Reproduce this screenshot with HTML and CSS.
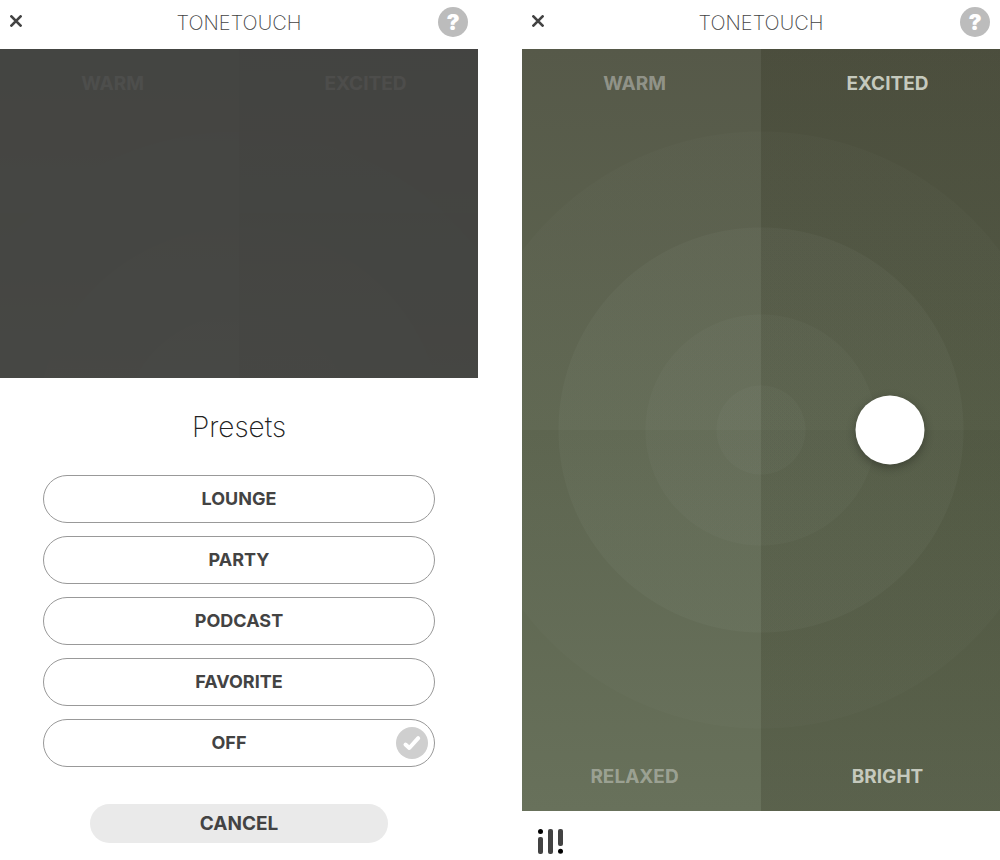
FILE: index.html
```html
<!DOCTYPE html>
<html lang="en">
  <head>
    <meta charset="UTF-8" />
    <meta name="viewport" content="width=device-width, initial-scale=1.0" />
    <title>ToneTouch</title>
    <link rel="stylesheet" href="styles.css">
  </head>
  <body>
    <main class="screens">
      <section class="screen">
        <header class="topbar">
          <button type="button" class="close" aria-label="Close">
            <svg width="12" height="12" viewBox="0 0 12 12"><path d="M1.4 1.4 10.6 10.6M10.6 1.4 1.4 10.6" /></svg>
          </button>
          <h1>TONETOUCH</h1>
          <button type="button" class="help" aria-label="Help">?</button>
        </header>
        <div class="pad dimmed">
          <span class="tone">WARM</span>
          <span class="tone">EXCITED</span>
        </div>
        <div class="sheet">
          <h2>Presets</h2>
          <div class="presets">
            <button type="button" class="preset">LOUNGE</button>
            <button type="button" class="preset">PARTY</button>
            <button type="button" class="preset">PODCAST</button>
            <button type="button" class="preset">FAVORITE</button>
            <button type="button" class="preset selected">
              <span>OFF</span>
              <svg class="check" width="32" height="32" viewBox="0 0 32 32">
                <circle cx="16" cy="16" r="16" />
                <path d="M9.5 17.5 13.3 21 22.2 11.2" />
              </svg>
            </button>
          </div>
          <button type="button" class="cancel">CANCEL</button>
        </div>
      </section>

      <section class="screen">
        <header class="topbar">
          <button type="button" class="close" aria-label="Close">
            <svg width="12" height="12" viewBox="0 0 12 12"><path d="M1.4 1.4 10.6 10.6M10.6 1.4 1.4 10.6" /></svg>
          </button>
          <h1>TONETOUCH</h1>
          <button type="button" class="help" aria-label="Help">?</button>
        </header>
        <div class="pad">
          <span class="tone">WARM</span>
          <span class="tone active">EXCITED</span>
          <span class="tone bottom">RELAXED</span>
          <span class="tone bottom active">BRIGHT</span>
          <button type="button" class="knob" aria-label="Tone"></button>
        </div>
        <footer class="bottombar">
          <button type="button" class="presets-btn" aria-label="Presets">
            <svg width="26" height="26" viewBox="0 0 26 26">
              <rect x="0" y="8" width="5" height="17" rx="2" />
              <rect x="10" y="0" width="5" height="25" rx="2" />
              <rect x="20" y="0" width="5" height="17" rx="2" />
              <circle class="dot" cx="2.5" cy="2.5" r="2.5" />
              <circle class="dot" cx="22.5" cy="22.3" r="2.5" />
            </svg>
          </button>
        </footer>
      </section>
    </main>
  </body>
</html>
```

FILE: styles.css
```css
* {
  box-sizing: border-box;
}
body {
  margin: 0;
  background: #fff;
  color: #434343;
  font-family: Inter, "Liberation Sans", sans-serif;
}
button {
  padding: 0;
  border: none;
  background: none;
  color: inherit;
  font-family: inherit;
  cursor: pointer;
}
svg {
  display: block;
}
.screens {
  display: grid;
  grid-template-columns: 1fr 1fr;
  gap: 44px;
  min-height: 100vh;
}
.screen {
  display: flex;
  flex-direction: column;
}

/* top bar */
.topbar {
  display: grid;
  grid-template-columns: 30px 1fr 30px;
  align-items: center;
  height: 49px;
  padding: 0 10px 6px;
}
.close {
  padding-bottom: 2px;
}
.close svg {
  fill: none;
  stroke: #434343;
  stroke-width: 2.7;
  stroke-linecap: round;
}
.topbar h1 {
  margin: 2px 0 0;
  font-size: 20px;
  line-height: 24px;
  font-weight: 200;
  text-align: center;
}
.help {
  width: 30px;
  height: 30px;
  border-radius: 50%;
  background: #bcbcbc;
  color: #fff;
  font-size: 22px;
  line-height: 30px;
  font-weight: 900;
}

/* tone pad */
.pad {
  --cy: 50%;
  position: relative;
  flex: 1;
  display: grid;
  grid-template-columns: 1fr 1fr;
  padding: 24px 0 23px;
  font-size: 19px;
  line-height: 22px;
  font-weight: 700;
  text-align: center;
  background:
    radial-gradient(circle at 50% var(--cy), rgba(235, 255, 245, 0.025) 44px, transparent 45px),
    radial-gradient(circle at 50% var(--cy), rgba(235, 255, 245, 0.025) 115px, transparent 116px),
    radial-gradient(circle at 50% var(--cy), rgba(235, 255, 245, 0.03) 202px, transparent 203px),
    radial-gradient(circle at 50% var(--cy), rgba(235, 255, 245, 0.015) 298px, transparent 299px),
    linear-gradient(90deg, transparent 50%, rgba(20, 20, 0, 0.16) 50%),
    linear-gradient(#565949, #5f6751 50%, #5b634d 50%, #68715b);
}
.tone {
  padding-right: 14px;
  color: rgba(255, 255, 255, 0.36);
}
.tone:nth-child(even) {
  padding-right: 0;
  padding-left: 14px;
}
.tone.active {
  color: #c5c9bd;
}
.tone.bottom {
  align-self: end;
}
.dimmed {
  --cy: 381px;
}
.dimmed .tone {
  color: rgba(255, 255, 255, 0.55);
}
.dimmed::after {
  content: "";
  position: absolute;
  inset: 0;
  background: rgba(67, 67, 65, 0.9);
}
.knob {
  position: absolute;
  top: 50%;
  left: 77%;
  width: 69px;
  height: 69px;
  border-radius: 50%;
  background: #fff;
  box-shadow: 0 3px 10px rgba(0, 0, 0, 0.3);
  transform: translate(-50%, -50%);
}

/* presets sheet */
.sheet {
  display: flex;
  flex-direction: column;
  padding: 32px 43px 17px;
}
.sheet h2 {
  margin: 0 0 31px;
  color: #222;
  font-size: 28px;
  line-height: 34px;
  font-weight: 200;
  text-align: center;
}
.presets {
  display: grid;
  gap: 13px;
}
.preset {
  height: 48px;
  border: 1px solid #999;
  border-radius: 24px;
  font-size: 18px;
  line-height: 22px;
  font-weight: 700;
}
.preset.selected {
  display: flex;
  align-items: center;
  padding: 0 6px 0 18px;
}
.preset.selected span {
  flex: 1;
}
.check circle {
  fill: #cfcfcf;
}
.check path {
  fill: none;
  stroke: #fff;
  stroke-width: 4;
  stroke-linecap: round;
  stroke-linejoin: round;
}
.cancel {
  align-self: center;
  width: 76%;
  height: 39px;
  margin-top: 37px;
  border-radius: 20px;
  background: #eaeaea;
  font-size: 19px;
  line-height: 22px;
  font-weight: 700;
}

/* bottom bar */
.bottombar {
  display: flex;
  align-items: center;
  height: 49px;
  padding: 13px 16px 0;
}
.presets-btn svg {
  fill: #434343;
}
.presets-btn .dot {
  fill: #000;
}
```
